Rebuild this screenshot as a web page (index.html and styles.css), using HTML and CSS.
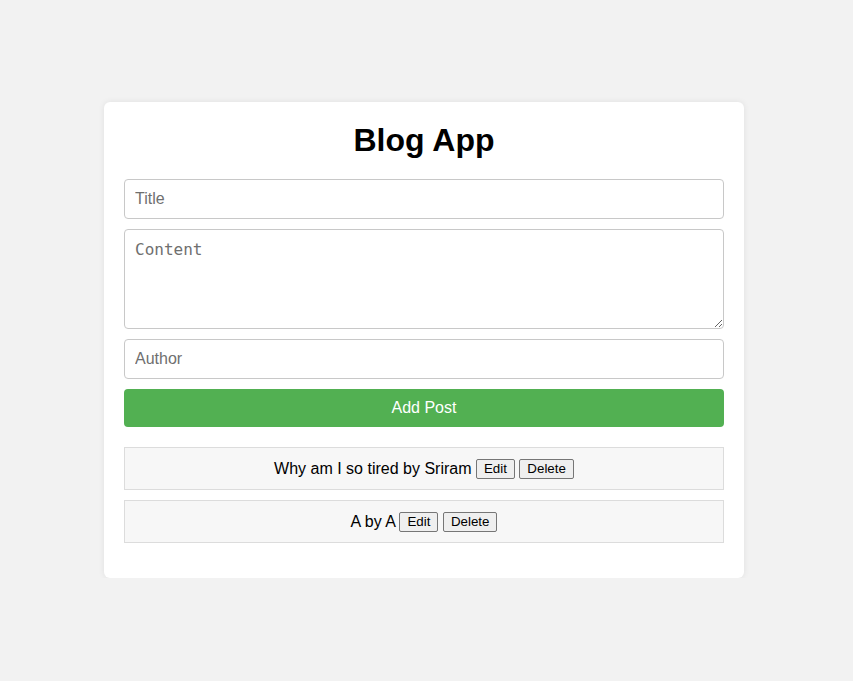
FILE: index.html
```html
<!DOCTYPE html>
<html>
<head>
<meta charset="utf-8">
<link rel="stylesheet" href="styles.css">
</head>
<body>
<div class="card">
  <h1 class="title">Blog App</h1>
  <form class="form">
    <input class="field" type="text" placeholder="Title">
    <textarea class="field area" placeholder="Content"></textarea>
    <input class="field" type="text" placeholder="Author">
    <button class="add" type="button">Add Post</button>
  </form>
  <ul class="posts">
    <li class="post">Why am I so tired by Sriram <button class="btn">Edit</button> <button class="btn">Delete</button></li>
    <li class="post">A by A <button class="btn">Edit</button> <button class="btn">Delete</button></li>
  </ul>
</div>
</body>
</html>
```
FILE: styles.css
```css
html, body {
  margin: 0;
  padding: 0;
}
body {
  background: #f2f2f2;
  font-family: "Liberation Sans", Arial, sans-serif;
  padding: 102px 5px 0 0;
}
.card {
  width: 600px;
  margin: 0 auto;
  background: #fff;
  padding: 20px 20px 35px;
  border-radius: 6px;
  box-shadow: 0 0 6px rgba(0,0,0,0.08);
}
.title {
  margin: 0 0 20px;
  text-align: center;
  font-size: 32px;
  line-height: 37px;
  font-weight: bold;
  color: #000;
}
.form {
  display: flex;
  flex-direction: column;
  gap: 10px;
}
.field {
  box-sizing: border-box;
  width: 100%;
  height: 40px;
  padding: 10px;
  border: 1px solid #c8c8c8;
  border-radius: 4px;
  font-size: 16px;
  font-family: "Liberation Sans", Arial, sans-serif;
  margin: 0;
}
.field::placeholder {
  color: #6f6f6f;
}
.area {
  height: 100px;
  font-family: "DejaVu Sans Mono", monospace;
  resize: vertical;
  display: block;
}
.add {
  height: 38px;
  border: none;
  border-radius: 4px;
  background: #52b052;
  color: #fff;
  font-size: 16px;
  font-family: "Liberation Sans", Arial, sans-serif;
  cursor: pointer;
}
.posts {
  list-style: none;
  margin: 20px 0 0;
  padding: 0;
  display: flex;
  flex-direction: column;
  gap: 10px;
}
.post {
  box-sizing: border-box;
  height: 43px;
  border: 1px solid #dcdcdc;
  background: #f7f7f7;
  text-align: center;
  font-size: 16px;
  line-height: 41px;
  color: #000;
}
.btn {
  font-family: "Liberation Sans", Arial, sans-serif;
  font-size: 13.33px;
  height: 20px;
  padding: 0 7px;
  border: 1px solid #767676;
  border-radius: 2px;
  background: #efefef;
  color: #000;
  vertical-align: 1px;
  line-height: 16px;
}
```
